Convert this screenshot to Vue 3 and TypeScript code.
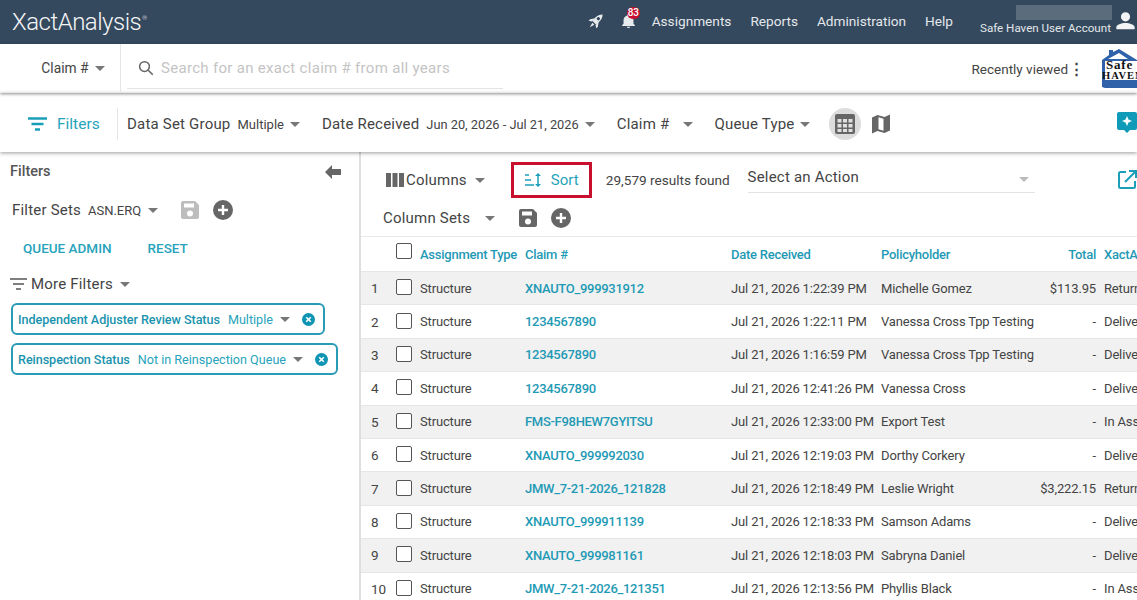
<template>
  <div class="page">
    <header class="topbar">
      <div class="logo">XactAnalysis<sup>®</sup></div>
      <nav class="nav">
        <svg class="rocket" width="20" height="20" viewBox="0 0 24 24"><g transform="rotate(45 12 12)" fill="#e8ebee"><path fill-rule="evenodd" d="M12 1C15.500 4 16 9 15 15H9C8 9 8.500 4 12 1ZM12 6a2 2 0 1 0 0 4 2 2 0 0 0 0-4Z"/><path d="M9 10.500 5.500 15.500V18L9 15.800ZM15 10.500l3.500 5V18L15 15.800ZM10.300 16.500h3.400L12 22.500Z"/></g></svg>
        <span class="bell">
          <svg width="17" height="18" viewBox="0 0 24 24"><path fill="#e8ebee" d="M12 22a2.500 2.500 0 0 0 2.500-2h-5A2.500 2.500 0 0 0 12 22zm7-6v-5c0-3.300-2-6-5-6.800V3.500a2 2 0 0 0-4 0v.7C7 5 5 7.700 5 11v5l-2 2v1h18v-1z"/></svg>
          <b class="badge">83</b>
        </span>
        <a class="first">Assignments</a>
        <a>Reports</a>
        <a>Administration</a>
        <a>Help</a>
      </nav>
      <div class="account">
        <div class="masked"></div>
        <div class="acct-name">Safe Haven User Account</div>
      </div>
      <svg class="user" width="21" height="20" viewBox="0 0 24 24"><path fill="#f1f3f5" d="M12 12.500a5.500 5.500 0 1 0 0-11 5.500 5.500 0 0 0 0 11zm0 2c-5 0-11 2-11 5v2.500h22V19.500c0-3-6-5-11-5z"/></svg>
    </header>

    <div class="searchbar">
      <div class="claim-select">Claim # <i class="caret"></i></div>
      <div class="search">
        <svg width="18" height="18" viewBox="0 0 24 24"><circle cx="10" cy="10" r="6.500" fill="none" stroke="#666" stroke-width="2"/><path d="M15 15l6 6" stroke="#666" stroke-width="2.200"/></svg>
        <span>Search for an exact claim # from all years</span>
      </div>
      <div class="recent">Recently viewed<span class="dots">⋮</span></div>
      <div class="brand">
        <svg class="roof" width="35" height="39" viewBox="0 0 35 39"><path fill="#2f62a8" d="M0 11 7 6V1h4v2l6-3 18 11v1H0zM0 31h35v8H3l-3-1z"/><path fill="#2f62a8" d="M0 11h3v24H0z"/><path fill="#fff" d="M6 10l11-6 9 6z"/></svg>
        <div class="brand-a">Safe</div>
        <div class="brand-b">HAVEN</div>
      </div>
    </div>

    <div class="filterbar">
      <div class="filters-toggle">
        <svg width="19" height="14" viewBox="0 0 19 14"><path d="M0 1.500h19M3.500 7h12M7 12.500h5" stroke="#1b9fb9" stroke-width="2.400"/></svg>
        <span>Filters</span>
      </div>
      <div class="fgroup">
        <span class="flabel">Data Set Group</span><span class="fval">Multiple</span><i class="caret"></i>
        <span class="flabel gap1">Date Received</span><span class="fval">Jun 20, 2026 - Jul 21, 2026</span><i class="caret"></i>
        <span class="flabel gap2">Claim #</span><i class="caret c3"></i>
        <span class="flabel gap3">Queue Type</span><i class="caret c4"></i>
      </div>
      <span class="grid-btn">
        <svg width="20" height="20" viewBox="0 0 20 20"><rect width="20" height="20" rx="2" fill="#666"/><path fill="#e0e0e0" d="M2.500 5h4v3.500h-4zM8 5h4v3.500H8zM13.500 5h4v3.500h-4zM2.500 10h4v3.500h-4zM8 10h4v3.500H8zM13.500 10h4v3.500h-4zM2.500 15h4v3h-4zM8 15h4v3H8zM13.500 15h4v3h-4z"/></svg>
      </span>
      <svg class="map" width="18" height="20" viewBox="0 0 18 20"><path fill="#666" d="M0 3.500 5.500 1l7 2L18 .5v16L12.500 19l-7-2L0 19.500z"/><path fill="#fff" d="M6.500 3.200l5 1.500v12.100l-5-1.500z"/></svg>
      <svg class="spark" width="20" height="21" viewBox="0 0 20 21"><path fill="#0f9ab8" d="M2 0h16a2 2 0 0 1 2 2v14a2 2 0 0 1-2 2h-5l-3 3-3-3H2a2 2 0 0 1-2-2V2a2 2 0 0 1 2-2z"/><path fill="#fff" d="M10 4l1.500 3.500L15 9l-3.500 1.500L10 14l-1.500-3.500L5 9l3.500-1.500z"/></svg>
    </div>

    <div class="body">
      <aside class="side">
        <div class="side-head">
          <span>Filters</span>
          <svg width="16" height="14" viewBox="0 0 16 14"><path fill="#666" d="M0 7l7-7v4h9v6H7v4z"/></svg>
        </div>
        <div class="sets">
          <span class="sets-label">Filter Sets</span>
          <span class="fval">ASN.ERQ</span><i class="caret"></i>
          <svg class="save" width="18" height="18" viewBox="0 0 18 18"><path fill="#bdbdbd" d="M2 0h12l4 4v12a2 2 0 0 1-2 2H2a2 2 0 0 1-2-2V2a2 2 0 0 1 2-2zm1 2.500v4h10v-4zM9 9.500a3 3 0 1 0 0 6 3 3 0 0 0 0-6z"/></svg>
          <svg class="add" width="20" height="20" viewBox="0 0 20 20"><circle cx="10" cy="10" r="10" fill="#666"/><path d="M10 5v10M5 10h10" stroke="#fff" stroke-width="2.400"/></svg>
        </div>
        <div class="links"><a>QUEUE ADMIN</a><a>RESET</a></div>
        <div class="more">
          <svg width="17" height="12" viewBox="0 0 17 12"><path d="M0 1h17M3 6h11M6 11h5" stroke="#555" stroke-width="1.400"/></svg>
          <span>More Filters</span><i class="caret"></i>
        </div>
        <div class="chip">
          <b>Independent Adjuster Review Status</b><span>Multiple</span><i class="caret"></i>
          <svg width="13" height="13" viewBox="0 0 13 13"><circle cx="6.500" cy="6.500" r="6.500" fill="#0f94b3"/><path d="M4.200 4.200l4.600 4.600M8.800 4.200l-4.600 4.600" stroke="#fff" stroke-width="1.600"/></svg>
        </div>
        <div class="chip">
          <b>Reinspection Status</b><span>Not in Reinspection Queue</span><i class="caret"></i>
          <svg width="13" height="13" viewBox="0 0 13 13"><circle cx="6.500" cy="6.500" r="6.500" fill="#0f94b3"/><path d="M4.200 4.200l4.600 4.600M8.800 4.200l-4.600 4.600" stroke="#fff" stroke-width="1.600"/></svg>
        </div>
      </aside>

      <main class="main">
        <div class="tools">
          <div class="columns">
            <svg width="18" height="14" viewBox="0 0 18 14"><path fill="#666" d="M0 0h5v14H0zM6.500 0h5v14h-5zM13 0h5v14h-5z"/></svg>
            <span>Columns</span><i class="caret"></i>
          </div>
          <div class="sort">
            <svg width="16" height="14" viewBox="0 0 16 14"><path d="M0 2h4M0 7h6M0 12h9" stroke="#1b9fb9" stroke-width="1.500"/><path d="M13 1v12" stroke="#1b9fb9" stroke-width="1.500"/><path fill="#1b9fb9" d="M13 0l3 3h-6zM13 14l3-3h-6z"/></svg>
            <span>Sort</span>
          </div>
          <div class="found">29,579 results found</div>
          <div class="action"><span>Select an Action</span><i class="caret light"></i></div>
          <svg class="open" width="19" height="19" viewBox="0 0 19 19"><path d="M8 2H2.500A1.500 1.500 0 0 0 1 3.500v13A1.500 1.500 0 0 0 2.500 18h13a1.500 1.500 0 0 0 1.500-1.500V11" fill="none" stroke="#1b9fb9" stroke-width="2"/><path d="M7 12 18 1M11 1h7v7" fill="none" stroke="#1b9fb9" stroke-width="2"/></svg>
        </div>
        <div class="colsets">
          <span>Column Sets</span><i class="caret"></i>
          <svg class="cs-save" width="18" height="18" viewBox="0 0 18 18"><path fill="#666" d="M2 0h12l4 4v12a2 2 0 0 1-2 2H2a2 2 0 0 1-2-2V2a2 2 0 0 1 2-2zm1 2.500v4h10v-4zM9 9.500a3 3 0 1 0 0 6 3 3 0 0 0 0-6z"/></svg>
          <svg class="cs-add" width="20" height="20" viewBox="0 0 20 20"><circle cx="10" cy="10" r="10" fill="#666"/><path d="M10 5v10M5 10h10" stroke="#fff" stroke-width="2.400"/></svg>
        </div>
        <div class="table">
          <div class="row head">
            <span></span>
            <span class="box"></span>
            <span>Assignment Type</span>
            <span>Claim #</span>
            <span>Date Received</span>
            <span>Policyholder</span>
            <span class="total">Total</span>
            <span class="xa">XactAnalysis</span>
          </div>
          <div v-for="(r, i) in rows" :key="i" class="row" :class="{ odd: i % 2 === 0 }">
            <span class="num">{{ i + 1 }}</span>
            <span class="box"></span>
            <span>Structure</span>
            <span class="claim">{{ r.claim }}</span>
            <span>{{ r.date }}</span>
            <span>{{ r.holder }}</span>
            <span class="total">{{ r.total }}</span>
            <span class="xa">{{ r.status }}</span>
          </div>
        </div>
      </main>
    </div>
  </div>
</template>

<script setup lang="ts">
interface Row {
  claim: string
  date: string
  holder: string
  total: string
  status: string
}

const rows: Row[] = [
  { claim: 'XNAUTO_999931912', date: 'Jul 21, 2026 1:22:39 PM', holder: 'Michelle Gomez', total: '$113.95', status: 'Returned' },
  { claim: '1234567890', date: 'Jul 21, 2026 1:22:11 PM', holder: 'Vanessa Cross Tpp Testing', total: '-', status: 'Delivered' },
  { claim: '1234567890', date: 'Jul 21, 2026 1:16:59 PM', holder: 'Vanessa Cross Tpp Testing', total: '-', status: 'Delivered' },
  { claim: '1234567890', date: 'Jul 21, 2026 12:41:26 PM', holder: 'Vanessa Cross', total: '-', status: 'Delivered' },
  { claim: 'FMS-F98HEW7GYITSU', date: 'Jul 21, 2026 12:33:00 PM', holder: 'Export Test', total: '-', status: 'In Assignment' },
  { claim: 'XNAUTO_999992030', date: 'Jul 21, 2026 12:19:03 PM', holder: 'Dorthy Corkery', total: '-', status: 'Delivered' },
  { claim: 'JMW_7-21-2026_121828', date: 'Jul 21, 2026 12:18:49 PM', holder: 'Leslie Wright', total: '$3,222.15', status: 'Returned' },
  { claim: 'XNAUTO_999911139', date: 'Jul 21, 2026 12:18:33 PM', holder: 'Samson Adams', total: '-', status: 'Delivered' },
  { claim: 'XNAUTO_999981161', date: 'Jul 21, 2026 12:18:03 PM', holder: 'Sabryna Daniel', total: '-', status: 'Delivered' },
  { claim: 'JMW_7-21-2026_121351', date: 'Jul 21, 2026 12:13:56 PM', holder: 'Phyllis Black', total: '-', status: 'In Assignment' },
]
</script>

<style>
html, body { margin: 0; background: #fff; overflow: hidden; }
</style>

<style scoped>
.page {
  width: 1137px;
  height: 600px;
  overflow: hidden;
  font-family: Roboto, "Liberation Sans", sans-serif;
  color: #3c3c3c;
  background: #fff;
}
.caret {
  display: inline-block;
  width: 0;
  height: 0;
  border-left: 5px solid transparent;
  border-right: 5px solid transparent;
  border-top: 5px solid #777;
}
.caret.light { border-top-color: #bbb; }

.topbar {
  height: 44px;
  background: #34495e;
  display: flex;
  align-items: center;
  color: #e3e7eb;
}
.logo {
  font-size: 24px;
  font-weight: 300;
  color: #f4f5f7;
  margin-left: 12px;
  letter-spacing: -0.5px;
  line-height: 40px;
  padding-bottom: 4px;
}
.logo sup { font-size: 6px; vertical-align: 10px; margin-left: 1px; }
.nav {
  margin-left: auto;
  display: flex;
  align-items: center;
  font-size: 13.650px;
  padding-bottom: 3px;
}
.nav a { margin-left: 19px; }
.nav a.first { margin-left: 15px; }
.rocket { margin-right: 14px; }
.bell { position: relative; display: block; height: 18px; }
.badge {
  position: absolute;
  top: -5px;
  left: 7px;
  background: #c8102e;
  color: #fff;
  border-radius: 7px;
  font-size: 10px;
  line-height: 12px;
  padding: 0 1px;
  font-weight: 500;
}
.account { margin-left: 27px; width: 133px; padding-top: 5px; height: 39px; }
.masked { height: 15px; width: 96px; margin-left: 36px; background: #5b6c7d; }
.acct-name { font-size: 11.600px; margin-top: 1px; white-space: nowrap; }
.user { margin-right: 1px; margin-left: 2px; margin-bottom: 2px; flex: none; }

.searchbar {
  height: 49px;
  display: flex;
  align-items: center;
  position: relative;
  z-index: 2;
  box-shadow: 0 1px 3px rgba(0, 0, 0, 0.45);
  overflow: hidden;
}
.claim-select {
  width: 121px;
  box-sizing: border-box;
  height: 49px;
  line-height: 49px;
  text-align: right;
  padding-right: 15px;
  border-right: 1px solid #e6e6e6;
  font-size: 13.800px;
  color: #444;
  white-space: nowrap;
}
.claim-select .caret { margin-left: 3px; vertical-align: 2px; }
.search {
  margin-left: 6px;
  width: 376px;
  height: 40px;
  box-sizing: border-box;
  border-bottom: 1px solid #e4e4e4;
  display: flex;
  align-items: center;
  padding-left: 10px;
  color: #c4c4c4;
  font-size: 15px;
  letter-spacing: 0.3px;
}
.search svg { margin-right: 6px; }
.recent { margin-left: auto; font-size: 13.500px; color: #444; white-space: nowrap; }
.dots { font-size: 15px; font-weight: 700; margin-left: 1px; }
.brand {
  width: 35px;
  margin-left: 18px;
  position: relative;
  height: 39px;
  overflow: hidden;
  font-family: "Liberation Serif", serif;
  font-weight: 700;
  color: #111;
}
.roof { display: block; position: absolute; top: 0; left: 0; }
.brand-a { position: absolute; top: 10px; left: 4px; font-size: 13px; line-height: 12px; letter-spacing: 0.8px; white-space: nowrap; }
.brand-b { position: absolute; top: 22px; left: 0; font-size: 10.500px; line-height: 9px; letter-spacing: 1px; white-space: nowrap; }

.filterbar {
  height: 59px;
  box-sizing: border-box;
  display: flex;
  align-items: center;
  position: relative;
  z-index: 1;
  box-shadow: 0 1px 4px rgba(0, 0, 0, 0.4);
  background: #fff;
  padding-top: 3px;
}
.filters-toggle {
  width: 118px;
  height: 32px;
  box-sizing: border-box;
  border-right: 1px solid #e6e6e6;
  display: flex;
  align-items: center;
  padding-left: 28px;
  color: #27a3bb;
  font-size: 15.500px;
}
.filters-toggle span { margin-left: 10px; }
.fgroup { display: flex; align-items: center; margin-left: 9px; white-space: nowrap; }
.flabel { font-size: 15px; color: #444; letter-spacing: 0.2px; }
.fval { font-size: 13px; margin-left: 7px; color: #444; }
.fgroup .caret { margin-left: 6px; }
.gap1 { margin-left: 22px; }
.gap2 { margin-left: 22px; }
.gap3 { margin-left: 21px; }
.gap1 + .fval { font-size: 12.800px; margin-left: 7px; }
.fgroup .c3 { margin-left: 14px; }
.fgroup .c4 { margin-left: 5px; }
.grid-btn {
  width: 32px;
  height: 32px;
  border-radius: 50%;
  background: #dcdcdc;
  margin-left: 19px;
  display: flex;
  align-items: center;
  justify-content: center;
}
.map { margin-left: 11px; }
.spark { margin-left: auto; margin-top: -4px; flex: none; }

.body { display: flex; height: 448px; }
.side {
  width: 361px;
  flex: none;
  box-sizing: border-box;
  border-right: 2px solid #dedede;
  padding-left: 10px;
}
.side-head {
  display: flex;
  justify-content: space-between;
  align-items: center;
  font-size: 14.500px;
  font-weight: 500;
  color: #555;
  padding: 12px 18px 0 0;
  line-height: 16px;
}
.sets { display: flex; align-items: center; margin-top: 20px; margin-left: 2px; height: 20px; }
.sets-label { font-size: 15px; color: #444; letter-spacing: 0.2px; }
.sets .fval { margin-left: 7px; }
.sets .caret { margin-left: 7px; }
.save { margin-left: 23px; }
.add { margin-left: 14px; }
.links {
  display: flex;
  margin-top: 20px;
  margin-left: 13px;
  font-size: 13.500px;
  font-weight: 500;
  color: #27a3bb;
  line-height: 16px;
}
.links a:last-child { margin-left: 36px; }
.more {
  display: flex;
  align-items: center;
  margin-top: 19px;
  font-size: 15px;
  color: #444;
  height: 18px;
  letter-spacing: 0.2px;
}
.more span { margin-left: 4px; }
.more .caret { margin-left: 7px; }
.chip {
  display: inline-flex;
  align-items: center;
  height: 32px;
  box-sizing: border-box;
  border: 2px solid #2a9bb5;
  border-radius: 6px;
  padding: 0 8px 0 5px;
  margin-top: 10px;
  margin-left: 1px;
  font-size: 12.600px;
  color: #27a3bb;
  white-space: nowrap;
}
.chip + .chip { margin-top: 8px; }
.chip b { font-weight: 500; color: #1a93ae; letter-spacing: -0.05px; }
.chip span { margin-left: 8px; }
.chip .caret { margin-left: 7px; }
.chip svg { margin-left: 12px; }

.main { flex: 1; min-width: 0; overflow: hidden; }
.tools { display: flex; align-items: center; height: 50px; margin-top: 3px; }
.columns {
  display: flex;
  align-items: center;
  margin-left: 25px;
  font-size: 15px;
  color: #444;
  letter-spacing: 0.2px;
}
.columns span { margin-left: 2px; }
.columns .caret { margin-left: 8px; }
.sort {
  display: flex;
  align-items: center;
  margin-left: 26px;
  width: 81px;
  height: 36px;
  box-sizing: border-box;
  border: 3px solid #c8102e;
  color: #27a3bb;
  font-size: 15px;
  padding-left: 11px;
  flex: none;
}
.sort span { margin-left: 10px; }
.found { margin-left: 14px; font-size: 13.600px; color: #444; white-space: nowrap; }
.action {
  margin-left: 18px;
  width: 287px;
  flex: none;
  height: 30px;
  box-sizing: border-box;
  border-bottom: 1px solid #e2e2e2;
  display: flex;
  align-items: center;
  justify-content: space-between;
  padding-right: 6px;
  font-size: 15px;
  color: #444;
  letter-spacing: 0.2px;
  margin-top: -5px;
}
.action .caret { margin-top: 4px; }
.open { margin-left: 83px; flex: none; margin-top: -2px; }
.colsets {
  display: flex;
  align-items: center;
  height: 34px;
  margin-top: -4px;
  margin-bottom: 1px;
  padding-left: 22px;
  font-size: 15px;
  color: #444;
  letter-spacing: 0.2px;
}
.colsets .caret { margin-left: 15px; }
.cs-save { margin-left: 24px; }
.cs-add { margin-left: 14px; }
.table { border-top: 1px solid #e8e8e8; }
.row {
  display: grid;
  grid-template-columns: 35px 24px 105px 206px 150px 159px 56px 80px;
  align-items: center;
  height: 33.400px;
  box-sizing: border-box;
  border-bottom: 1px solid #e6e6e6;
  font-size: 13px;
  color: #444;
  white-space: nowrap;
  letter-spacing: -0.15px;
}
.row.odd { background: #f1f1f1; }
.row.head { color: #1f9ab5; font-weight: 500; height: 35px; font-size: 13px; letter-spacing: -0.25px; }
.row > span { overflow: hidden; }
.num { padding-left: 10px; font-size: 13.500px; }
.box {
  width: 16px;
  height: 16px;
  box-sizing: border-box;
  border: 1.500px solid #555;
  border-radius: 2px;
  background: #fff;
  margin-bottom: 2px;
}
.row.head .box { margin-bottom: 6px; }
.claim { color: #1f9ab5; font-weight: 500; letter-spacing: -0.3px; }
.total { text-align: right; }
.row > .total { overflow: visible; }
.xa { padding-left: 8px; }
</style>
